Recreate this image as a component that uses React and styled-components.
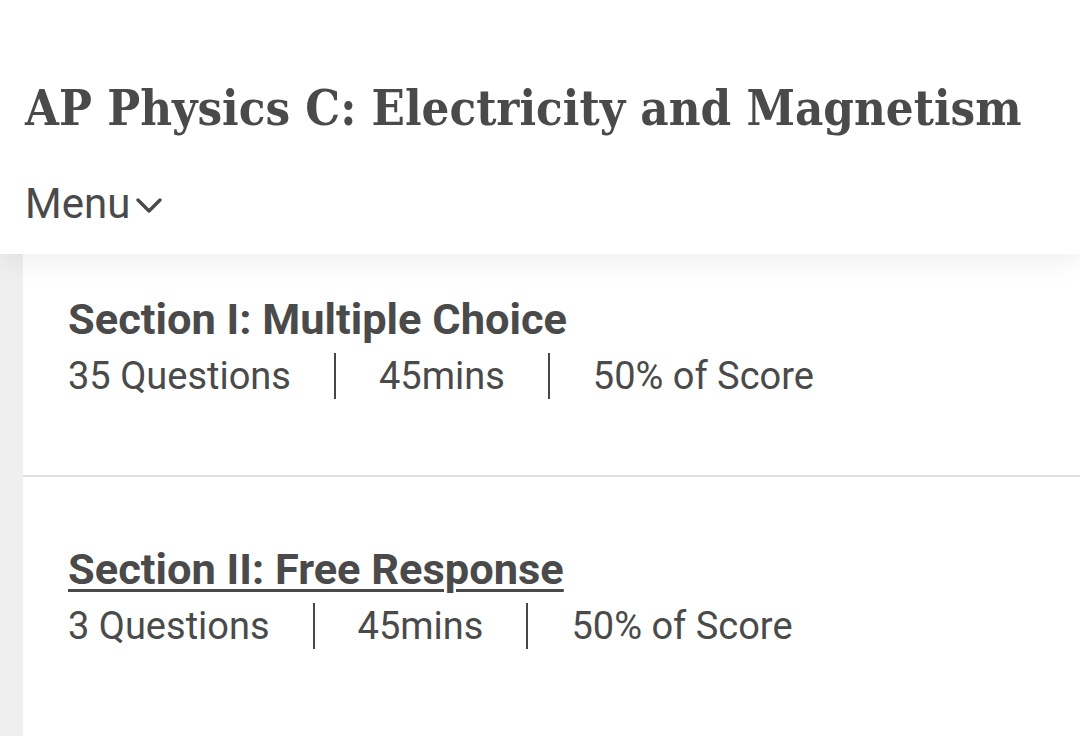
import React from 'react'
import styled, { createGlobalStyle } from 'styled-components'

const Global = createGlobalStyle`
    body {
        margin: 0;
        background: #ffffff;
        font-family: Roboto, "Liberation Sans", sans-serif;
        color: #4a4a4a;
    }
`

const Pagina = styled.div`
    width: 1080px;
    height: 736px;
    overflow: hidden;
    display: flex;
    flex-direction: column;
`

const Cabecalho = styled.header`
    position: relative;
    z-index: 1;
    height: 254px;
    box-sizing: border-box;
    padding: 78px 25px 0;
    background: #ffffff;
    box-shadow: 0 6px 28px rgba(0, 0, 0, 0.07);
`

const Titulo = styled.h1`
    margin: 0;
    font-family: "DejaVu Serif Condensed", "DejaVu Serif", serif;
    font-weight: bold;
    font-size: 48.7px;
    line-height: 60px;
    color: #4a4a4a;
    white-space: nowrap;
`

const Menu = styled.div`
    margin-top: 41px;
    display: flex;
    align-items: center;
    font-size: 42px;
    line-height: 50px;
    color: #4a4a4a;

    svg {
        margin-left: 6px;
        margin-top: 4px;
    }
`

const Corpo = styled.div`
    flex: 1;
    display: flex;
    background: #efefef;
`

const Faixa = styled.div`
    width: 23px;
    background: #efefef;
`

const Conteudo = styled.main`
    flex: 1;
    background: #ffffff;
`

const Secao = styled.section`
    padding: ${p => p.$topo}px 0 76px 45px;
    border-bottom: ${p => (p.$linha ? '2px solid #e0e0e0' : 'none')};
`

const TituloSecao = styled.h2`
    margin: 0;
    font-size: 43.4px;
    font-weight: 700;
    line-height: 50px;
    color: #4a4a4a;
    text-decoration: ${p => (p.$sublinhado ? 'underline' : 'none')};
    text-decoration-thickness: 3px;
    text-underline-offset: 5px;
`

const Detalhes = styled.div`
    margin-top: 8px;
    display: flex;
    align-items: center;
`

const Item = styled.span`
    font-size: 38px;
    line-height: 46px;
    padding: 0 43px;
    border-left: 2px solid #474747;
    color: #4a4a4a;

    &:first-child {
        padding-left: 0;
        border-left: none;
    }
`

const Seta = () => (
    <svg width="26" height="18" viewBox="0 0 26 18">
        <polyline points="2,3 13,14 24,3" fill="none" stroke="#4a4a4a" strokeWidth="3.4" strokeLinecap="round" strokeLinejoin="round" />
    </svg>
)

const secoes = [
    { titulo: 'Section I: Multiple Choice', itens: ['35 Questions', '45mins', '50% of Score'], topo: 41, linha: true },
    { titulo: 'Section II: Free Response', itens: ['3 Questions', '45mins', '50% of Score'], topo: 68, sublinhado: true },
]

export default function App() {
    return (
        <Pagina>
            <Global />
            <Cabecalho>
                <Titulo>AP Physics C: Electricity and Magnetism</Titulo>
                <Menu>Menu<Seta /></Menu>
            </Cabecalho>
            <Corpo>
                <Faixa />
                <Conteudo>
                    {secoes.map(s => (
                        <Secao key={s.titulo} $topo={s.topo} $linha={s.linha}>
                            <TituloSecao $sublinhado={s.sublinhado}>{s.titulo}</TituloSecao>
                            <Detalhes>
                                {s.itens.map(i => <Item key={i}>{i}</Item>)}
                            </Detalhes>
                        </Secao>
                    ))}
                </Conteudo>
            </Corpo>
        </Pagina>
    )
}
